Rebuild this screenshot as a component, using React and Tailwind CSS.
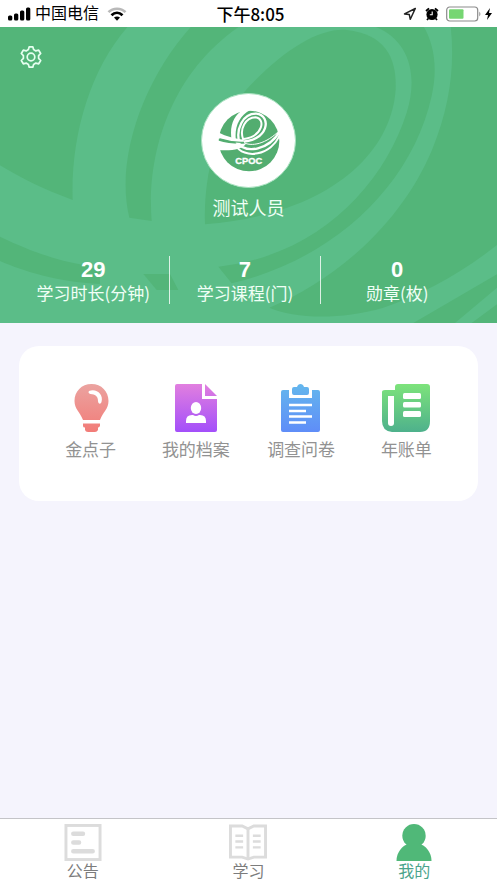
import React from "react";

const stats = [
  { value: "29", label: "学习时长(分钟)" },
  { value: "7", label: "学习课程(门)" },
  { value: "0", label: "勋章(枚)" },
];

function StatusBar() {
  return (
    <div className="grid h-[27px] shrink-0 grid-cols-[1fr_auto_1fr] items-center bg-white pr-1 pl-2 text-black">
      <div className="flex items-center">
        <svg className="mr-1 h-4 w-[23px]" viewBox="0 0 23 16" aria-hidden="true">
          <rect x="0" y="9.500" width="4.300" height="5" rx="1.500" />
          <rect x="6" y="7.500" width="4.300" height="7" rx="1.500" />
          <rect x="12" y="4.500" width="4.300" height="10" rx="1.500" />
          <rect x="18" y="1.500" width="4.300" height="13" rx="1.500" />
        </svg>
        <span className="text-base leading-5">中国电信</span>
        <svg className="ml-2 h-[14px] w-5" viewBox="0 0 20 14" fill="none" aria-hidden="true">
          <path d="M1.500 5.200C6 .5 14 .5 18.500 5.200" stroke="#b9b9b9" strokeWidth="2.600" />
          <path d="M4.500 8.300C7.800 5.100 12.200 5.100 15.500 8.300" stroke="#000" strokeWidth="2.700" />
          <path d="M7 10.500C8.800 9 11.200 9 13 10.500L10 13.700Z" fill="#000" />
        </svg>
      </div>
      <span className="font-['Noto_Sans_CJK_SC',sans-serif] text-[17px] leading-5 font-medium">下午8:05</span>
      <div className="flex items-center justify-end">
        <svg className="h-[14px] w-[14px]" viewBox="0 0 14 14" fill="none" aria-hidden="true">
          <path d="M12.300 1.500L1.500 6.900L6.300 7.600L7.300 12.300Z" stroke="#222" strokeWidth="1.500" strokeLinejoin="round" />
        </svg>
        <svg className="ml-2 h-[14px] w-[14px]" viewBox="0 0 14 14" aria-hidden="true">
          <circle cx="7" cy="7.500" r="5.600" />
          <path d="M1 4L4 1.300M13 4L10 1.300M3.300 11.500L2 13M10.700 11.500L12 13" stroke="#000" strokeWidth="1.800" />
          <path d="M7.200 4.500V7.800H4.800" stroke="#fff" strokeWidth="1.100" fill="none" />
        </svg>
        <svg className="ml-[7px] h-4 w-[36px]" viewBox="0 0 36 16" fill="none" aria-hidden="true">
          <rect x="0.700" y="1" width="31" height="14" rx="3" stroke="#8b8b8b" strokeWidth="1.200" />
          <rect x="3" y="3.200" width="14.500" height="9.600" rx="1" fill="#76d672" />
          <path d="M33.300 5.500Q35.500 8 33.300 10.500Z" fill="#8b8b8b" />
        </svg>
        <svg className="ml-[2px] h-[14px] w-[9px]" viewBox="0 0 9 14" aria-hidden="true">
          <path d="M6 1L1 8H4L3 13L8 6H5Z" />
        </svg>
      </div>
    </div>
  );
}

function RibbonBackground() {
  return (
    <svg className="absolute inset-0 h-full w-full" viewBox="0 3 1491 888" preserveAspectRatio="none" aria-hidden="true">
      <path
        fill="#5bbd88"
        d="M385 0C270 130 212 330 218 522C130 490 60 455 0 418V891H1240L1491 745V657C1380 745 1260 808 1150 845C1010 885 880 875 808 845C1000 765 1200 600 1296 372C1350 240 1365 120 1352 0Z"
      />
      <path fill="#5bbd88" d="M1365 891L1491 785V835L1415 891Z" />
      <g fill="#53b579">
        <path d="M575 0C430 160 345 400 388 575L455 585C440 400 500 150 720 0Z" />
        <path d="M615 595C610 470 640 300 740 190C850 70 960 5 1040 12C1160 25 1190 100 1187 190C1175 380 990 565 615 595Z" />
        <path d="M1120 0C1230 40 1255 150 1220 260C1150 480 950 690 655 722L695 772C1000 700 1235 480 1295 210C1315 120 1300 50 1270 0Z" />
        <path d="M0 632C100 680 180 705 250 717L300 722V774C170 768 70 735 0 705Z" />
        <path d="M430 744H510L535 792H470Z" />
      </g>
    </svg>
  );
}

function Logo() {
  return (
    <svg className="h-[62px] w-[62px]" viewBox="25 28 186 186" role="img" aria-label="CPOC">
      <circle cx="118" cy="121" r="91" fill="#53ad70" />
      <g fill="#fff">
        <path d="M107 25C75 37 58 74 66 118L79 122C73 81 88 45 122 28Z" />
        <path d="M20 92C48 107 75 114 102 117L99 126C70 124 45 119 20 111Z" />
        <path d="M20 118C48 127 75 131 109 129C99 145 60 153 20 147Z" />
      </g>
      <g fill="none" stroke="#fff">
        <path d="M90 130C76 84 101 38 140 39C187 44 178 123 91 123" strokeWidth="7" />
        <path d="M101 118C88 84 108 51 138 50C168 53 162 108 98 116" strokeWidth="6" />
        <path d="M80 124C110 162 178 148 212 90" strokeWidth="7" />
        <path d="M76 132C104 178 184 166 212 100" strokeWidth="6" />
        <path d="M98 124C125 140 170 130 211 88" strokeWidth="3" />
      </g>
      <path d="M30 115C55 123 80 126 103 125" fill="none" stroke="#53ad70" strokeWidth="4" />
      <text
        x="117"
        y="191"
        textAnchor="middle"
        fill="#fff"
        stroke="#fff"
        strokeWidth="1"
        fontFamily="Liberation Sans Narrow, Liberation Sans, sans-serif"
        fontWeight="700"
        fontSize="28"
      >
        CPOC
      </text>
    </svg>
  );
}

function Profile() {
  return (
    <header className="relative h-[296px] shrink-0 overflow-hidden bg-[#53b579] text-white">
      <RibbonBackground />
      <div className="relative flex h-full flex-col">
        <button className="mt-[18px] ml-[19px] h-6 w-6 shrink-0" aria-label="设置">
          <svg className="h-6 w-6" viewBox="0 0 24 24" fill="none" stroke="#e6fff0" strokeWidth="1.700" strokeLinejoin="round">
            <path d="M10.200 1.800H13.800L14.600 4.600L16.800 5.900L19.700 5.200L21.700 8.500L19.600 10.700V13.300L21.700 15.500L19.700 18.800L16.800 18.100L14.600 19.400L13.800 22.200H10.200L9.400 19.400L7.200 18.100L4.300 18.800L2.300 15.500L4.400 13.300V10.700L2.300 8.500L4.300 5.200L7.200 5.900L9.400 4.600Z" />
            <circle cx="12" cy="12" r="3.800" />
          </svg>
        </button>
        <div className="mt-6 flex flex-col items-center">
          <div className="flex h-[95px] w-[95px] items-center justify-center rounded-full border border-[#a9e2c0] bg-white">
            <Logo />
          </div>
          <h1 className="mt-2 text-lg leading-[26px] text-[#f0fff6]">测试人员</h1>
        </div>
        <dl className="mt-[34px] grid grid-cols-3 divide-x divide-white/80 pr-6 pl-[18px] text-center">
          {stats.map((item) => (
            <div key={item.label} className="flex h-12 flex-col-reverse justify-start">
              <dt className="font-['Noto_Sans_CJK_SC',sans-serif] text-[17px] leading-[22px] whitespace-nowrap text-[#f0fff6]">
                {item.label}
              </dt>
              <dd className="text-[22px] leading-6 font-bold">{item.value}</dd>
            </div>
          ))}
        </dl>
      </div>
    </header>
  );
}

function BulbIcon() {
  return (
    <svg className="h-12 w-12" viewBox="0 0 48 48" aria-hidden="true">
      <defs>
        <linearGradient id="bulb" gradientUnits="userSpaceOnUse" x1="0" y1="0" x2="0" y2="48">
          <stop offset="0" stopColor="#eba3a0" />
          <stop offset="1" stopColor="#f27c78" />
        </linearGradient>
      </defs>
      <g fill="url(#bulb)">
        <path d="M24.500 0C14.500 0 7.500 7.500 7.500 17C7.500 25 13 28 16 36H33C36 28 41.500 25 41.500 17C41.500 7.500 34.500 0 24.500 0Z" />
        <path d="M16 39.500H33V42Q32 43.500 31 43.500V46Q30 48 28 48H21Q18.500 48 18 46V43.500Q16 43.500 16 42Z" />
      </g>
      <path d="M22 7C29 4 37 10 34.500 18C33.500 21 31 19.500 31 17C31 12 28 10.500 23.500 10Q20.500 9 22 7Z" fill="#fff" />
    </svg>
  );
}

function ArchiveIcon() {
  return (
    <svg className="h-12 w-12" viewBox="0 0 48 48" aria-hidden="true">
      <defs>
        <linearGradient id="archive" gradientUnits="userSpaceOnUse" x1="0" y1="0" x2="0" y2="48">
          <stop offset="0" stopColor="#e17fdf" />
          <stop offset="1" stopColor="#a34ffa" />
        </linearGradient>
      </defs>
      <g fill="url(#archive)">
        <path d="M5 0H30V15H45V46Q45 48 43 48H5Q3 48 3 46V2Q3 0 5 0Z" />
        <path d="M33 0L45 12H33Z" />
      </g>
      <ellipse cx="24" cy="24" rx="5.200" ry="6" fill="#fff" />
      <path d="M14 39V37Q14 31 20 31H21Q24 33 27 31H28Q34 31 34 37V39Z" fill="#fff" />
    </svg>
  );
}

function SurveyIcon() {
  return (
    <svg className="h-12 w-12" viewBox="0 0 48 48" aria-hidden="true">
      <defs>
        <linearGradient id="survey" gradientUnits="userSpaceOnUse" x1="0" y1="0" x2="0" y2="48">
          <stop offset="0" stopColor="#64b7ed" />
          <stop offset="1" stopColor="#5f8df8" />
        </linearGradient>
      </defs>
      <g fill="url(#survey)">
        <path d="M6 6H12V14H35V6H41Q43 6 43 8V46Q43 48 41 48H6Q4 48 4 46V8Q4 6 6 6Z" />
        <path d="M17 3H20C21 -1 26 -1 27 3H30Q32 3 32 5V9Q32 11 30 11H17Q15 11 15 9V5Q15 3 17 3Z" />
      </g>
      <path d="M12 21H35M12 27H29M12 32.500H35M12 38.500H29" stroke="#fff" strokeWidth="2.600" />
    </svg>
  );
}

function BillIcon() {
  return (
    <svg className="h-12 w-12" viewBox="0 0 48 48" aria-hidden="true">
      <defs>
        <linearGradient id="bill" x1="0" y1="0" x2="0" y2="1">
          <stop offset="0" stopColor="#7de37b" />
          <stop offset="1" stopColor="#4eb18c" />
        </linearGradient>
      </defs>
      <path d="M16 0H45Q48 0 48 3V37Q48 48 38 48H10Q0 47 0 37V8Q0 6 3 6H13V3Q13 0 16 0Z" fill="url(#bill)" />
      <g fill="#fff">
        <rect x="6" y="12" width="6" height="30" rx="3" />
        <path d="M6 12H12V18H6Z" />
        <rect x="21" y="9" width="18" height="6" rx="1.500" />
        <rect x="21" y="18" width="18" height="5.500" rx="1.500" />
        <rect x="21" y="27" width="18" height="6" rx="1.500" />
      </g>
    </svg>
  );
}

const menus = [
  { label: "金点子", Icon: BulbIcon },
  { label: "我的档案", Icon: ArchiveIcon },
  { label: "调查问卷", Icon: SurveyIcon },
  { label: "年账单", Icon: BillIcon },
];

function NoticeIcon() {
  return (
    <svg className="h-[38px] w-[38px]" viewBox="0 0 38 38" fill="none" aria-hidden="true">
      <rect x="1.500" y="1.500" width="35" height="35" stroke="#dcdcdc" strokeWidth="3" />
      <path d="M9 10H19M9 19H15M9 28H29" stroke="#dcdcdc" strokeWidth="4.500" strokeLinecap="round" />
    </svg>
  );
}

function BookIcon() {
  return (
    <svg className="h-[38px] w-10" viewBox="0 0 40 38" fill="none" stroke="#dcdcdc" aria-hidden="true">
      <path d="M2 2H14L20 5L26 2H38V34H26L20 36L14 34H2Z" strokeWidth="3" />
      <path d="M20 5V35" strokeWidth="3" />
      <path d="M7 12H15M7 18H15M7 24H15M25 12H33M25 18H33M25 24H33" strokeWidth="2.500" />
    </svg>
  );
}

function UserIcon() {
  return (
    <svg className="h-[38px] w-[38px]" viewBox="0 0 38 38" fill="#50b878" aria-hidden="true">
      <ellipse cx="19" cy="12" rx="12" ry="12" />
      <path d="M1 38C1 29 7 22 14 20H24C31 22 37 29 37 38Z" />
    </svg>
  );
}

const tabs = [
  { label: "公告", Icon: NoticeIcon },
  { label: "学习", Icon: BookIcon },
  { label: "我的", Icon: UserIcon, active: true },
];

function App() {
  return (
    <div className="flex min-h-screen flex-col bg-[#f5f4fd] font-['Liberation_Sans','Noto_Sans_CJK_SC',sans-serif]">
      <StatusBar />
      <Profile />

      <main className="flex-1 px-[19px] pt-[23px] pb-6">
        <section className="grid grid-cols-4 rounded-[20px] bg-white px-[19px] py-[38px]">
          {menus.map(({ label, Icon }) => (
            <button key={label} className="flex flex-col items-center">
              <Icon />
              <span className="mt-[6px] text-[17px] leading-[25px] whitespace-nowrap text-[#929292]">{label}</span>
            </button>
          ))}
        </section>
      </main>

      {/* Bottom tabs */}
      <nav className="grid shrink-0 grid-cols-3 border-t border-[#c4c4c8] bg-white">
        {tabs.map(({ label, Icon, active }) => (
          <button key={label} className="flex h-16 flex-col items-center pt-[5px]" aria-current={active ? "page" : undefined}>
            <Icon />
            <span className={`text-base leading-[22px] ${active ? "text-[#4ba48c]" : "text-[#7c7c7c]"}`}>{label}</span>
          </button>
        ))}
      </nav>
    </div>
  );
}

export default App;
